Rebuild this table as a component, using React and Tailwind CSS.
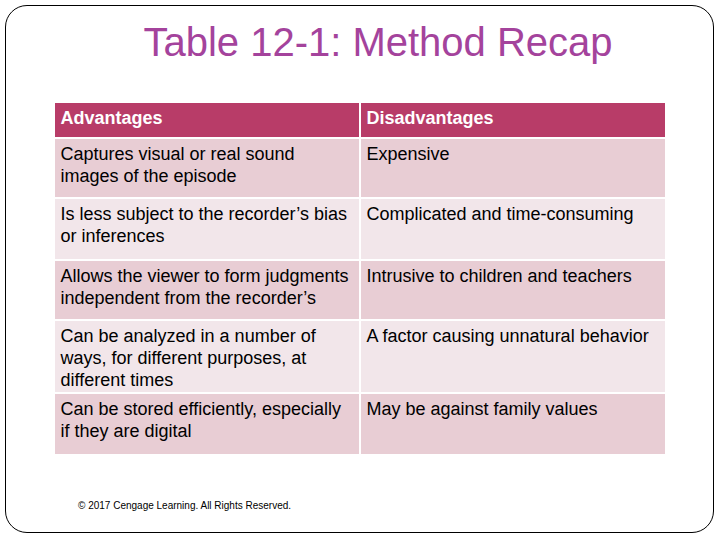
const rows = [
  { left: "Captures visual or real sound images of the episode", right: "Expensive", h: "h-[58px]", bg: "bg-[#e8cdd4]" },
  { left: "Is less subject to the recorder’s bias or inferences", right: "Complicated and time-consuming", h: "h-[60px]", bg: "bg-[#f2e6ea]" },
  { left: "Allows the viewer to form judgments independent from the recorder’s", right: "Intrusive to children and teachers", h: "h-[58px]", bg: "bg-[#e8cdd4]" },
  { left: "Can be analyzed in a number of ways, for different purposes, at different times", right: "A factor causing unnatural behavior", h: "h-[71px]", bg: "bg-[#f2e6ea]" },
  { left: "Can be stored efficiently, especially if they are digital", right: "May be against family values", h: "h-[60px]", bg: "bg-[#e8cdd4]" },
];

export default function App() {
  return (
    <div className="w-[720px] h-[540px] bg-white pt-[5px] pl-[5px]" style={{ fontFamily: '"Liberation Sans", Arial, sans-serif' }}>
      <div className="w-[709px] h-[528px] border-[1.5px] border-black rounded-[22px] flex flex-col">
        {/* Title */}
        <h1 className="pt-[12px] pl-[37px] text-center text-[40px] leading-[48px] text-[#a4439c]">
          Table 12-1: Method Recap
        </h1>

        {/* Table */}
        <div className="mt-[37px] ml-[48.5px] w-[610px] grid grid-cols-2 gap-[2px]">
          <div className="h-[34px] bg-[#b83c68] text-white font-bold text-[18px] leading-[22px] pt-[4px] px-[6px]">
            Advantages
          </div>
          <div className="h-[34px] bg-[#b83c68] text-white font-bold text-[18px] leading-[22px] pt-[4px] px-[6px]">
            Disadvantages
          </div>
          {rows.map((r, i) => (
            <div key={i} className="contents">
              <div className={`${r.h} ${r.bg} text-black text-[18px] leading-[22px] pt-[4px] pl-[6px] pr-[9px]`}>
                {r.left}
              </div>
              <div className={`${r.h} ${r.bg} text-black text-[18px] leading-[22px] pt-[4px] pl-[6px] pr-[9px]`}>
                {r.right}
              </div>
            </div>
          ))}
        </div>

        {/* Footer */}
        <p className="mt-[46px] ml-[72px] text-[10px] leading-[12px] text-black">
          © 2017 Cengage Learning. All Rights Reserved.
        </p>
      </div>
    </div>
  );
}
